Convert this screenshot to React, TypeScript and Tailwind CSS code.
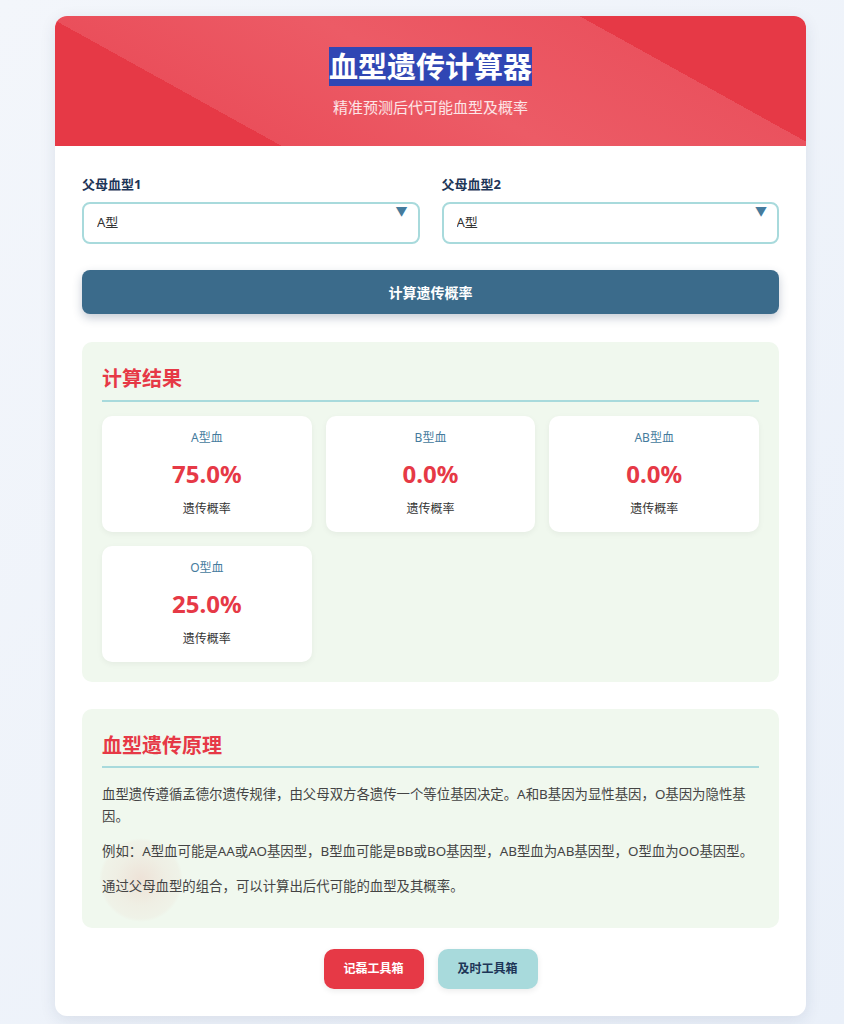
import React, { useState } from 'react';

const font = { fontFamily: '"Noto Sans", "Noto Sans CJK SC", sans-serif' };

const bloodTypes = ['A型', 'B型', 'AB型', 'O型'];

const results = [
  { type: 'A型血', pct: '75.0%' },
  { type: 'B型血', pct: '0.0%' },
  { type: 'AB型血', pct: '0.0%' },
  { type: 'O型血', pct: '25.0%' },
];

const ParentSelect: React.FC<{ label: string; value: string; onChange: (v: string) => void }> = ({ label, value, onChange }) => (
  <div className="flex-1">
    <label className="block text-[13px] font-bold text-[#1d3557] mb-[8px] leading-[20px]">{label}</label>
    <div className="relative">
      <select
        value={value}
        onChange={e => onChange(e.target.value)}
        className="w-full h-[42px] appearance-none bg-white border-2 border-[#a8dadc] rounded-[8px] pl-[13px] text-[13px] text-[#333] outline-none"
      >
        {bloodTypes.map(t => (
          <option key={t} value={t}>{t}</option>
        ))}
      </select>
      <span className="absolute right-[12px] top-[1px] text-[12px] text-[#457b9d] pointer-events-none">▼</span>
    </div>
  </div>
);

export default function App() {
  const [p1, setP1] = useState('A型');
  const [p2, setP2] = useState('A型');

  return (
    <div style={font} className="min-h-screen bg-[linear-gradient(135deg,#f3f6fb_0%,#eaf0f9_100%)] pt-[16px] pb-[20px]">
      <div className="ml-[55px] w-[751px] bg-white rounded-[12px] shadow-[0_4px_16px_rgba(29,53,87,0.10)] overflow-hidden">
        {/* header */}
        <div className="h-[130px] bg-[linear-gradient(29deg,#e63946_0%,#e63946_23%,#ea4f5b_23%,#ec5b66_50%,#ea525e_77%,#e63946_77%,#e63946_100%)] flex flex-col items-center pt-[27px]">
          <h1 className="text-[29px] font-bold text-white leading-[47px]">
            <span className="bg-[#3046b4]">血型遗传计算器</span>
          </h1>
          <p className="text-[15px] text-white/85 mt-[7px] leading-[20px]">精准预测后代可能血型及概率</p>
        </div>

        <div className="px-[27px] pt-[28px] pb-[27px]">
          <div className="flex gap-[22px]">
            <ParentSelect label="父母血型1" value={p1} onChange={setP1} />
            <ParentSelect label="父母血型2" value={p2} onChange={setP2} />
          </div>

          <button className="mt-[26px] w-full h-[44px] rounded-[8px] bg-[#3b6b8b] text-white text-[14px] font-bold shadow-[0_4px_10px_rgba(29,53,87,0.25)]">
            计算遗传概率
          </button>

          {/* results */}
          <div className="mt-[28px] bg-[#f0f8ee] rounded-[10px] px-[20px] pt-[22px] pb-[20px]">
            <h2 className="text-[20px] font-bold text-[#e63946] leading-[30px] pb-[6px] border-b-2 border-[#a8dadc]">计算结果</h2>
            <div className="mt-[14px] grid grid-cols-3 gap-x-[14px] gap-y-[14px]">
              {results.map(r => (
                <div key={r.type} className="bg-white rounded-[10px] shadow-[0_2px_6px_rgba(0,0,0,0.05)] h-[116px] flex flex-col items-center pt-[13px]">
                  <div className="text-[12px] text-[#457b9d] leading-[18px]">{r.type}</div>
                  <div className="text-[24px] font-bold text-[#e63946] leading-[30px] mt-[12px]">{r.pct}</div>
                  <div className="text-[12px] text-[#333] leading-[18px] mt-[11px]">遗传概率</div>
                </div>
              ))}
            </div>
          </div>

          {/* principle */}
          <div className="relative mt-[27px] bg-[#f0f8ee] rounded-[10px] px-[20px] pt-[22px] pb-[31px] overflow-hidden">
            <div className="absolute left-[17px] top-[129px] w-[84px] h-[84px] rounded-full bg-[radial-gradient(circle_closest-side,rgba(225,110,95,0.16)_0%,rgba(225,130,110,0.08)_60%,rgba(225,150,130,0.06)_92%,rgba(225,150,130,0)_100%)] pointer-events-none" />
            <h2 className="text-[20px] font-bold text-[#e63946] leading-[30px] pb-[5px] border-b-2 border-[#a8dadc]">血型遗传原理</h2>
            <div className="relative mt-[15px] text-[13.4px] text-[#444] leading-[22px] flex flex-col gap-[13px]">
              <p>血型遗传遵循孟德尔遗传规律，由父母双方各遗传一个等位基因决定。A和B基因为显性基因，O基因为隐性基因。</p>
              <p>例如：A型血可能是AA或AO基因型，B型血可能是BB或BO基因型，AB型血为AB基因型，O型血为OO基因型。</p>
              <p>通过父母血型的组合，可以计算出后代可能的血型及其概率。</p>
            </div>
          </div>

          {/* links */}
          <div className="mt-[21px] flex justify-center gap-[14px]">
            <button className="w-[100px] h-[40px] rounded-[10px] bg-[#e63946] text-white text-[12px] font-bold shadow-[0_2px_6px_rgba(0,0,0,0.08)]">记磊工具箱</button>
            <button className="w-[100px] h-[40px] rounded-[10px] bg-[#a8dadc] text-[#1d3557] text-[12px] font-bold shadow-[0_2px_6px_rgba(0,0,0,0.08)]">及时工具箱</button>
          </div>
        </div>
      </div>
    </div>
  );
}
